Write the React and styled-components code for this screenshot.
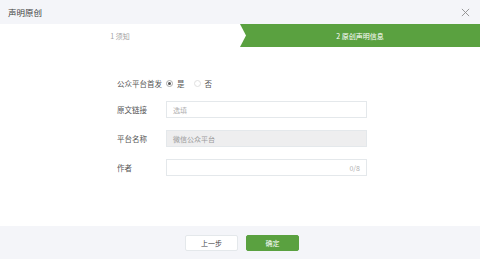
import React from "react";
import styled, { createGlobalStyle } from "styled-components";

const Global = createGlobalStyle`
  html, body { margin: 0; padding: 0; background: #fff; }
  body {
    font-family: "Noto Sans CJK SC", "Noto Sans", sans-serif;
    color: #444;
  }
`;

const Dialog = styled.div`
  width: 480px;
  height: 259px;
  display: flex;
  flex-direction: column;
  background: #fff;
`;

const Header = styled.div`
  height: 24px;
  background: #f4f5f9;
  display: flex;
  align-items: center;
  justify-content: space-between;
  padding: 0 10px 0 8px;
`;

const Title = styled.div`
  font-size: 8.5px;
  color: #3e3e3e;
`;

const Close = styled.svg`
  width: 9px;
  height: 9px;
`;

const Steps = styled.div`
  height: 23px;
  display: flex;
  background: #5aa140;
`;

const Step = styled.div`
  flex: 1;
  display: flex;
  align-items: center;
  justify-content: center;
  font-size: 7px;
  color: ${(p) => (p.$active ? "#fff" : "#a3a3a3")};
  background: ${(p) => (p.$active ? "#5aa140" : "#fff")};
  ${(p) =>
    !p.$active &&
    `clip-path: polygon(0 0, calc(100% - 6px) 0, 100% 50%, calc(100% - 6px) 100%, 0 100%);
     margin-right: -6px; z-index: 1; padding-right: 6px;`}
`;

const Body = styled.div`
  flex: 1;
  display: flex;
  flex-direction: column;
  gap: 12px;
  padding: 31px 0 0 117px;
`;

const Row = styled.div`
  display: flex;
  align-items: center;
  height: ${(p) => p.$h || 17}px;
`;

const Label = styled.div`
  width: 49px;
  font-size: 7.5px;
  color: #555;
`;

const Radio = styled.label`
  display: flex;
  align-items: center;
  gap: 4px;
  font-size: 7.5px;
  color: #555;
  margin-right: 9px;
`;

const Dot = styled.span`
  width: 7px;
  height: 7px;
  border-radius: 50%;
  box-sizing: border-box;
  border: 1px solid ${(p) => (p.$on ? "#aaa" : "#e0e0e0")};
  display: flex;
  align-items: center;
  justify-content: center;
  &::after {
    content: "";
    width: 3px;
    height: 3px;
    border-radius: 50%;
    background: ${(p) => (p.$on ? "#555" : "transparent")};
  }
`;

const Field = styled.div`
  width: 201px;
  height: 17px;
  box-sizing: border-box;
  border: 1px solid #e4e8eb;
  background: ${(p) => (p.$disabled ? "#eeeeef" : "#fff")};
  display: flex;
  align-items: center;
  justify-content: space-between;
  padding: 0 6px;
  font-size: 7px;
  color: ${(p) => (p.$disabled ? "#9a9a9a" : "#b0b0b0")};
`;

const Footer = styled.div`
  height: 33px;
  background: #f4f5f9;
  display: flex;
  align-items: center;
  justify-content: center;
  gap: 8px;
  padding-left: 4px;
`;

const Button = styled.button`
  width: 53px;
  height: 16px;
  border-radius: 2px;
  font-family: inherit;
  font-size: 7px;
  padding: 0;
  cursor: pointer;
  border: 1px solid ${(p) => (p.$primary ? "#5aa140" : "#e4e8eb")};
  background: ${(p) => (p.$primary ? "#5aa140" : "#fff")};
  color: ${(p) => (p.$primary ? "#fff" : "#444")};
`;

export default function App() {
  return (
    <Dialog>
      <Global />
      <Header>
        <Title>声明原创</Title>
        <Close viewBox="0 0 10 10">
          <path d="M1 1L9 9M9 1L1 9" stroke="#8d8d8d" strokeWidth="1" />
        </Close>
      </Header>
      <Steps>
        <Step>1 须知</Step>
        <Step $active>2 原创声明信息</Step>
      </Steps>
      <Body>
        <Row $h={11}>
          <Label>公众平台首发</Label>
          <Radio>
            <Dot $on />是
          </Radio>
          <Radio>
            <Dot />否
          </Radio>
        </Row>
        <Row>
          <Label>原文链接</Label>
          <Field>选填</Field>
        </Row>
        <Row>
          <Label>平台名称</Label>
          <Field $disabled>微信公众平台</Field>
        </Row>
        <Row>
          <Label>作者</Label>
          <Field>
            <span />
            <span>0/8</span>
          </Field>
        </Row>
      </Body>
      <Footer>
        <Button>上一步</Button>
        <Button $primary>确定</Button>
      </Footer>
    </Dialog>
  );
}
